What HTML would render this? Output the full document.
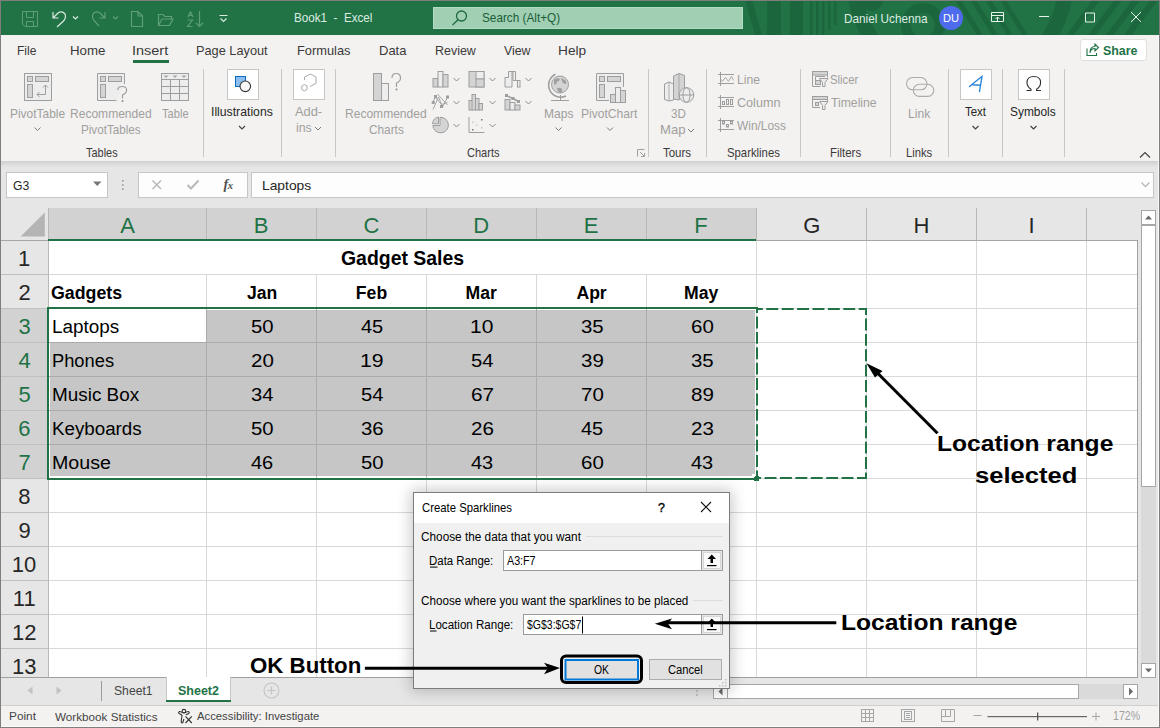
<!DOCTYPE html>
<html><head><meta charset="utf-8"><style>
html,body{margin:0;padding:0;width:1160px;height:728px;overflow:hidden;background:#fff}
body{position:relative;font-family:"Liberation Sans",sans-serif}
.r{position:absolute}
.t{position:absolute;white-space:pre;line-height:normal;transform-origin:0 0}
svg{position:absolute;overflow:visible}
</style></head><body>
<div class="r" style="left:0px;top:0px;width:1160px;height:728px;background:#e6e6e6;"></div>
<div class="r" style="left:0px;top:0px;width:1160px;height:35px;background:#217346;"></div>
<div class="r" style="left:0px;top:35px;width:1160px;height:126px;background:#f3f2f1;"></div>
<div class="r" style="left:0px;top:161px;width:1160px;height:47px;background:#e6e6e6;"></div>
<div class="r" style="left:0;top:161px;width:1160px;height:6px;background:linear-gradient(#d0d0d0,#e6e6e6)"></div>
<svg style="left:0;top:0;overflow:hidden" width="1160" height="35" viewBox="0 0 1160 35"><g fill="#1c663d"><path d="M745 0 H752 L762 35 H755 Z"/><rect x="767" y="0" width="14" height="35"/><rect x="790" y="0" width="13" height="35"/><rect x="810" y="0" width="2.5" height="35"/><rect x="816" y="0" width="2.5" height="35"/><rect x="822" y="0" width="2.5" height="35"/><rect x="828" y="0" width="2.5" height="30"/><rect x="834" y="0" width="2.5" height="25"/><circle cx="871" cy="-2" r="13"/></g><g fill="none" stroke="#1c663d"><circle cx="923" cy="25" r="17" stroke-width="10"/><circle cx="960" cy="-20" r="106" stroke-width="15"/><path d="M958 0 L980 35 M973 0 L995 35 M988 0 L1010 35 M1003 0 L1025 35" stroke-width="5"/><path d="M1070 35 L1100 -5 M1088 40 L1122 -5 M1106 40 L1140 -5 M1124 40 L1158 -5" stroke-width="6"/></g></svg>
<svg style="left:0;top:0" width="240" height="35" viewBox="0 0 240 35"><g fill="none" stroke="#5e9e79" stroke-width="1"><path d="M22.5 11.5 H37.5 V26.5 H25 L22.5 24 Z M26.5 11.5 V17.5 H33.5 V11.5 M26.5 26.5 V21.5 H33.5 V26.5"/></g><g fill="none" stroke="#d9ebe0" stroke-width="1.2"><path d="M53 12 V18 H58.5 M53.5 17.5 L58 13 Q62 10.5 65 14 Q66.5 17.5 63.5 21 L57 27"/><path d="M73 16.5 L75.5 19 L78 16.5"/></g><g fill="none" stroke="#5e9e79" stroke-width="1.2"><path d="M105 12 V18 H99.5 M104.5 17.5 L100 13 Q96 10.5 93 14 Q91.5 17.5 94.5 21 L99 26"/><path d="M113 16.5 L115.5 19 L118 16.5"/><path d="M131.5 11.5 H138 L142.5 16 V26.5 H131.5 Z M138 11.5 V16 H142.5"/><path d="M158.5 25.5 V14.5 H163 L165 16.5 H171.5 V19 M158.5 25.5 L162 19 H173 L169.5 25.5 Z"/><path d="M188 17 L190.5 12 L193 17 M189 15.5 H192 M187.5 20 H192.5 L187.5 26.5 H192.5 M199.5 11 V26.5 M196 23 L199.5 26.5 L203 23"/></g><g fill="none" stroke="#d9ebe0" stroke-width="1.2"><path d="M219.5 15.5 H227.5 M220.5 18.5 L223.5 21.5 L226.5 18.5"/></g></svg>
<div class="t" style="left:294.07px;top:10.20px;font-size:13.00px;color:#dcece2;transform:scaleX(0.8967);">Book1  -  Excel</div>
<div class="r" style="left:432.5px;top:6.8px;width:310.5px;height:22.2px;background:#a0cfb3;box-sizing:border-box;border:1px solid #b6dbc5;"></div>
<svg style="left:449px;top:9px" width="20" height="18" viewBox="0 0 20 18"><g fill="none" stroke="#1f6b40" stroke-width="1.3"><circle cx="12.5" cy="7" r="5"/><path d="M9 10.8 L3.5 16"/></g></svg>
<div class="t" style="left:481.87px;top:10.40px;font-size:13.00px;color:#1b5e38;transform:scaleX(0.9052);">Search (Alt+Q)</div>
<div class="t" style="left:844.06px;top:11.00px;font-size:13.00px;color:#dcece2;transform:scaleX(0.9032);">Daniel Uchenna</div>
<div class="r" style="left:938.5px;top:6px;width:24px;height:24px;border-radius:50%;background:#4f6bed"></div>
<div class="t" style="left:942.91px;top:12.00px;font-size:11.50px;color:#ffffff;transform:scaleX(0.9677);">DU</div>
<svg style="left:980px;top:0" width="180" height="35" viewBox="980 0 180 35"><g fill="none" stroke="#e8f2ec" stroke-width="1"><path d="M991.5 12.5 H1003.5 V21.5 H991.5 Z M991.5 15.5 H1003.5 M997.5 21 V17 M995.5 19 L997.5 17 L999.5 19"/><path d="M1039 16.5 H1049"/><path d="M1085.5 13 H1094.5 V22 H1085.5 Z"/><path d="M1131 12 L1141 22 M1141 12 L1131 22"/></g></svg>
<div class="t" style="left:17.44px;top:43.00px;font-size:13.40px;color:#3b3a39;transform:scaleX(0.8995);">File</div>
<div class="t" style="left:69.54px;top:43.00px;font-size:13.40px;color:#3b3a39;transform:scaleX(0.9931);">Home</div>
<div class="t" style="left:131.90px;top:43.00px;font-size:13.40px;color:#3b3a39;transform:scaleX(1.0798);">Insert</div>
<div class="t" style="left:196.38px;top:43.00px;font-size:13.40px;color:#3b3a39;transform:scaleX(0.9527);">Page Layout</div>
<div class="t" style="left:297.37px;top:43.00px;font-size:13.40px;color:#3b3a39;transform:scaleX(0.9588);">Formulas</div>
<div class="t" style="left:379.16px;top:43.00px;font-size:13.40px;color:#3b3a39;transform:scaleX(0.9705);">Data</div>
<div class="t" style="left:435.30px;top:43.00px;font-size:13.40px;color:#3b3a39;transform:scaleX(0.9305);">Review</div>
<div class="t" style="left:503.94px;top:43.00px;font-size:13.40px;color:#3b3a39;transform:scaleX(0.9220);">View</div>
<div class="t" style="left:557.90px;top:43.00px;font-size:13.40px;color:#3b3a39;transform:scaleX(1.0220);">Help</div>
<div class="r" style="left:133px;top:60px;width:36px;height:3px;background:#217346;"></div>
<div class="r" style="left:1079.5px;top:38.8px;width:67px;height:22.5px;background:#ffffff;box-sizing:border-box;border:1px solid #e1dfdd;border-radius:3px;"></div>
<svg style="left:1085px;top:43px" width="16" height="14" viewBox="0 0 16 14"><g fill="none" stroke="#217346" stroke-width="1.1"><path d="M2 5.5 V12.5 H11.5 V10"/><path d="M5 10 Q5.5 5.5 10 5.5 V8 L13.5 4.5 L10 1 V3.5 Q5 3.5 5 10"/></g></svg>
<div class="t" style="left:1102.63px;top:42.80px;font-size:13.20px;color:#217346;font-weight:bold;transform:scaleX(0.9403);">Share</div>
<div class="r" style="left:203px;top:69px;width:1px;height:88px;background:#c8c6c4;"></div>
<div class="r" style="left:281px;top:69px;width:1px;height:88px;background:#c8c6c4;"></div>
<div class="r" style="left:335px;top:69px;width:1px;height:88px;background:#c8c6c4;"></div>
<div class="r" style="left:648px;top:69px;width:1px;height:88px;background:#c8c6c4;"></div>
<div class="r" style="left:706px;top:69px;width:1px;height:88px;background:#c8c6c4;"></div>
<div class="r" style="left:800px;top:69px;width:1px;height:88px;background:#c8c6c4;"></div>
<div class="r" style="left:890px;top:69px;width:1px;height:88px;background:#c8c6c4;"></div>
<div class="r" style="left:948px;top:69px;width:1px;height:88px;background:#c8c6c4;"></div>
<div class="r" style="left:1002px;top:69px;width:1px;height:88px;background:#c8c6c4;"></div>
<div class="r" style="left:1064px;top:69px;width:1px;height:88px;background:#c8c6c4;"></div>
<div class="t" style="left:85.78px;top:144.70px;font-size:12.80px;color:#3b3a39;transform:scaleX(0.8543);">Tables</div>
<div class="t" style="left:467.05px;top:144.70px;font-size:12.80px;color:#3b3a39;transform:scaleX(0.8632);">Charts</div>
<div class="t" style="left:662.77px;top:144.70px;font-size:12.80px;color:#3b3a39;transform:scaleX(0.8957);">Tours</div>
<div class="t" style="left:726.89px;top:144.70px;font-size:12.80px;color:#3b3a39;transform:scaleX(0.8851);">Sparklines</div>
<div class="t" style="left:829.58px;top:144.70px;font-size:12.80px;color:#3b3a39;transform:scaleX(0.8937);">Filters</div>
<div class="t" style="left:905.60px;top:144.70px;font-size:12.80px;color:#3b3a39;transform:scaleX(0.8763);">Links</div>
<div class="t" style="left:10.24px;top:106.00px;font-size:13.00px;color:#a19f9d;transform:scaleX(0.9183);">PivotTable</div>
<div class="t" style="left:69.64px;top:106.00px;font-size:13.00px;color:#a19f9d;transform:scaleX(0.9263);">Recommended</div>
<div class="t" style="left:80.77px;top:121.50px;font-size:13.00px;color:#a19f9d;transform:scaleX(0.8954);">PivotTables</div>
<div class="t" style="left:161.78px;top:106.00px;font-size:13.00px;color:#a19f9d;transform:scaleX(0.8569);">Table</div>
<div class="t" style="left:211.20px;top:104.00px;font-size:13.00px;color:#262626;transform:scaleX(0.9399);">Illustrations</div>
<div class="t" style="left:295.00px;top:104.00px;font-size:13.00px;color:#a19f9d;transform:scaleX(0.9885);">Add-</div>
<div class="t" style="left:295.50px;top:119.70px;font-size:13.00px;color:#a19f9d;transform:scaleX(0.9452);">ins</div>
<div class="t" style="left:345.44px;top:106.00px;font-size:13.00px;color:#a19f9d;transform:scaleX(0.9263);">Recommended</div>
<div class="t" style="left:369.41px;top:121.60px;font-size:13.00px;color:#a19f9d;transform:scaleX(0.9091);">Charts</div>
<div class="t" style="left:543.64px;top:106.00px;font-size:13.00px;color:#a19f9d;transform:scaleX(0.9277);">Maps</div>
<div class="t" style="left:581.43px;top:106.00px;font-size:13.00px;color:#a19f9d;transform:scaleX(0.9288);">PivotChart</div>
<div class="t" style="left:670.54px;top:105.80px;font-size:13.00px;color:#a19f9d;transform:scaleX(0.8920);">3D</div>
<div class="t" style="left:659.55px;top:122.00px;font-size:13.00px;color:#a19f9d;transform:scaleX(1.0074);">Map</div>
<div class="t" style="left:736.53px;top:71.50px;font-size:13.00px;color:#a19f9d;transform:scaleX(0.9370);">Line</div>
<div class="t" style="left:736.87px;top:94.50px;font-size:13.00px;color:#a19f9d;transform:scaleX(0.9702);">Column</div>
<div class="t" style="left:737.44px;top:117.80px;font-size:13.00px;color:#a19f9d;transform:scaleX(0.9167);">Win/Loss</div>
<div class="t" style="left:830.49px;top:71.50px;font-size:13.00px;color:#a19f9d;transform:scaleX(0.8670);">Slicer</div>
<div class="t" style="left:830.76px;top:94.50px;font-size:13.00px;color:#a19f9d;transform:scaleX(0.9377);">Timeline</div>
<div class="t" style="left:908.43px;top:106.00px;font-size:13.00px;color:#a19f9d;transform:scaleX(0.9336);">Link</div>
<div class="t" style="left:964.77px;top:104.00px;font-size:13.00px;color:#262626;transform:scaleX(0.8822);">Text</div>
<div class="t" style="left:1010.46px;top:104.00px;font-size:13.00px;color:#262626;transform:scaleX(0.9157);">Symbols</div>
<svg style="left:0;top:0" width="1160" height="728" viewBox="0 0 1160 728"><g stroke="#9e9e9e" stroke-width="1"><rect x="24.5" y="73.5" width="27" height="27" fill="#ededed"/><rect x="27.5" y="76.5" width="5" height="5" fill="#d4d4d4"/><rect x="35.5" y="76.5" width="13" height="5" fill="#d4d4d4"/><rect x="27.5" y="84.5" width="5" height="13" fill="#d4d4d4"/><path d="M45.5 85 V94.5 H37 M43 87.5 L45.5 85 L48 87.5 M39.5 92 L37 94.5 L39.5 97" fill="none"/><path d="M124.5 84 V73.5 H97.5 V100.5 H116.5" fill="#ededed"/><rect x="100.5" y="76.5" width="5" height="5" fill="#d4d4d4"/><rect x="108.5" y="76.5" width="13" height="5" fill="#d4d4d4"/><rect x="100.5" y="84.5" width="5" height="13" fill="#d4d4d4"/><path d="M117.8 90 Q117.8 86.5 122.2 86.5 Q126.6 86.5 126.6 90.3 Q126.6 93.3 122.5 95 V98.5" fill="none" stroke-width="1.2"/><rect x="122" y="100.6" width="1" height="1" stroke-width="0.8"/><rect x="161.5" y="73.5" width="27" height="27" fill="#ededed"/><path d="M161.5 79.5 H188.5 M161.5 86.5 H188.5 M161.5 93.5 H188.5 M170.5 79.5 V100.5 M179.5 79.5 V100.5" fill="none"/></g><g fill="#a8a8a8"><path d="M163.5 75.5 h5 l-2.5 2.5z M172.5 75.5 h5 l-2.5 2.5z M181.5 75.5 h5 l-2.5 2.5z"/></g><path d="M34.5 127.5 L37.5 130.5 L40.5 127.5" fill="none" stroke="#7a7a7a" stroke-width="1"/><rect x="227.5" y="69.5" width="31" height="30" fill="#fff" stroke="#c8c6c4"/><rect x="235.5" y="76.5" width="10" height="10" fill="#8cbff0" stroke="#0f6cbd"/><circle cx="245.3" cy="86.3" r="5.3" fill="#f7f7f7" stroke="#333" stroke-width="1.1"/><path d="M239.0 126.0 L242.0 129.0 L245.0 126.0" fill="none" stroke="#444" stroke-width="1.2"/><rect x="293.5" y="69.5" width="31" height="30" fill="#fff" stroke="#c8c6c4"/><g fill="none" stroke="#ababab" stroke-width="1"><path d="M304.5 80 V77 L310.3 74 L316 77 V83.5 L310 86.5"/><path d="M304.4 84.5 L307 86 V89.5 L304.4 91 L301.8 89.5 V86 Z"/></g><path d="M315.0 127.0 L318.0 130.0 L321.0 127.0" fill="none" stroke="#7a7a7a" stroke-width="1"/><g stroke="#9e9e9e" stroke-width="1"><rect x="373.5" y="73.5" width="8" height="27" fill="#d4d4d4"/><rect x="381.5" y="83.5" width="7" height="17" fill="#ededed"/><path d="M392 78 Q392 73.5 396.2 73.5 Q400.5 73.5 400.5 78 Q400.5 81.5 396.5 83 V87" fill="none" stroke-width="1.2"/><rect x="396" y="89" width="1" height="1" stroke-width="0.8"/></g><g transform="translate(432.5 71)" stroke="#9e9e9e" stroke-width="1"><rect x="0.5" y="7.5" width="5" height="8.5" fill="#d4d4d4"/><rect x="5.5" y="0.5" width="5" height="15.5" fill="#ededed"/><rect x="10.5" y="3.5" width="5" height="12.5" fill="#d4d4d4"/></g><g transform="translate(468.5 71)" stroke="#9e9e9e" stroke-width="1"><rect x="0.5" y="0.5" width="15" height="15.5" fill="#d4d4d4"/><rect x="7.5" y="0.5" width="8" height="7.5" fill="#ededed"/><rect x="7.5" y="8" width="8" height="8" fill="#d4d4d4"/></g><g transform="translate(504.5 71)" stroke="#9e9e9e" stroke-width="1"><path d="M0.5 16 V6.5 H4 V0.5 H7.5 V16 Z" fill="#ededed"/><path d="M5 0.5 H11 V9.5 H8.5 V0.5" fill="none"/><rect x="13" y="9.5" width="2.5" height="6.5" fill="#ededed"/><path d="M11 9.5 H13" fill="none"/></g><g transform="translate(432.5 94)" stroke="#9e9e9e" stroke-width="1"><path d="M0.5 15.5 L6 3 L10 13 L15.5 2.5 M0.5 8.5 L2.5 3 L9 10.5 L15 8.5 M5 0 L15 11" fill="none" stroke-width="0.9"/><rect x="2" y="1.5" width="2" height="2" fill="#9e9e9e"/><rect x="-0.3" y="7.5" width="2" height="2" fill="#9e9e9e"/><rect x="8" y="11.5" width="2" height="2" fill="#9e9e9e"/><rect x="14" y="2" width="2" height="2" fill="#9e9e9e"/></g><g transform="translate(468.5 94)" stroke="#9e9e9e" stroke-width="1"><rect x="0.5" y="6.5" width="3.5" height="9.5" fill="#d4d4d4"/><rect x="3.5" y="0.5" width="3.5" height="15.5" fill="#d4d4d4"/><rect x="7" y="4.5" width="3.5" height="11.5" fill="#d4d4d4"/><rect x="10.5" y="9.5" width="3.5" height="6.5" fill="#d4d4d4"/></g><g transform="translate(504.5 94)" stroke="#9e9e9e" stroke-width="1"><rect x="0.5" y="5.5" width="5" height="10.5" fill="#d4d4d4"/><rect x="5.5" y="8.5" width="5" height="7.5" fill="#ededed"/><rect x="10.5" y="11" width="5" height="5" fill="#d4d4d4"/><path d="M1.5 1.5 L8.5 4.5 L14 7.5" fill="none" stroke-width="1.5"/><rect x="1" y="0.5" width="2" height="2" fill="#9e9e9e"/><rect x="7.5" y="3.5" width="2" height="2" fill="#9e9e9e"/><rect x="13" y="6.5" width="2" height="2" fill="#9e9e9e"/></g><g transform="translate(432.5 117)" stroke="#9e9e9e" stroke-width="1"><path d="M7.5 0.3 A7.8 7.8 0 1 1 0.3 8.5 H7.5 Z" fill="#d4d4d4"/><path d="M6 6.8 H0 A7 7 0 0 1 6 0 Z" fill="#d4d4d4"/></g><g transform="translate(468.5 117)" stroke="#9e9e9e" stroke-width="1"><path d="M0.5 0 V15.5 H16" fill="none"/><rect x="3.5" y="12" width="1.5" height="1.5" fill="#777" stroke="none"/><rect x="12.5" y="2" width="1.5" height="1.5" fill="#777" stroke="none"/><rect x="3.5" y="4.5" width="1.5" height="1.5" fill="#ccc" stroke="none"/><rect x="7.5" y="7.5" width="1.5" height="1.5" fill="#ccc" stroke="none"/><rect x="12.5" y="10" width="1.5" height="1.5" fill="#ccc" stroke="none"/></g><path d="M453.5 78.0 L456.5 81.0 L459.5 78.0" fill="none" stroke="#8a8a8a" stroke-width="1"/><path d="M453.5 101.0 L456.5 104.0 L459.5 101.0" fill="none" stroke="#8a8a8a" stroke-width="1"/><path d="M489.5 78.0 L492.5 81.0 L495.5 78.0" fill="none" stroke="#8a8a8a" stroke-width="1"/><path d="M489.5 101.0 L492.5 104.0 L495.5 101.0" fill="none" stroke="#8a8a8a" stroke-width="1"/><path d="M525.5 78.0 L528.5 81.0 L531.5 78.0" fill="none" stroke="#8a8a8a" stroke-width="1"/><path d="M525.5 101.0 L528.5 104.0 L531.5 101.0" fill="none" stroke="#8a8a8a" stroke-width="1"/><path d="M453.5 124.0 L456.5 127.0 L459.5 124.0" fill="none" stroke="#8a8a8a" stroke-width="1"/><path d="M489.5 124.0 L492.5 127.0 L495.5 124.0" fill="none" stroke="#8a8a8a" stroke-width="1"/><g stroke="#9e9e9e" stroke-width="1" fill="none"><circle cx="560" cy="84.5" r="8.5" fill="#d4d4d4"/><path d="M555.5 74.2 A10.8 10.8 0 0 0 566 96" stroke-width="1.5"/><path d="M560.5 95 V100.5 M551 100.5 H569"/></g><g fill="#a0a0a0"><path d="M554 80 q3 -3 6 -1 q-1 3 -3 3 q-1 4 -3 2z M561 78 q3 1 5 3 q1 3 -1 3 q-3 -1 -3 -3z M557 88 q3 -1 5 1 q1 3 -2 4 q-3 -2 -3 -5z"/></g><path d="M555.5 127.5 L558.5 130.5 L561.5 127.5" fill="none" stroke="#7a7a7a" stroke-width="1"/><g stroke="#9e9e9e" stroke-width="1"><path d="M609 100.5 H596.5 V73.5 H623.5 V87" fill="#ededed"/><rect x="599.5" y="76.5" width="5" height="5" fill="#d4d4d4"/><rect x="607.5" y="76.5" width="13" height="5" fill="#d4d4d4"/><rect x="599.5" y="84.5" width="5" height="13" fill="#d4d4d4"/><rect x="610.5" y="94.5" width="5" height="8" fill="#d4d4d4"/><rect x="615.5" y="87.5" width="5" height="15" fill="#ededed"/><rect x="620.5" y="90.5" width="5" height="12" fill="#d4d4d4"/></g><path d="M607.0 127.5 L610.0 130.5 L613.0 127.5" fill="none" stroke="#7a7a7a" stroke-width="1"/><g stroke="#a0a0a0" fill="none" stroke-width="1"><path d="M637.5 156.5 V149.5 H644.5 M640 152 L644.5 156.5 M641 156.5 H644.5 V153"/></g><g stroke="#9e9e9e" stroke-width="1"><path d="M664.5 84 L669 82 L673.5 84 V100 L669 101 L664.5 99.5 Z" fill="#ededed"/><path d="M669 82 V101" fill="none" stroke-width="0.8"/><path d="M673.5 76 L679 73.5 L684.5 75.5 V91 L679 100 L673.5 99 Z" fill="#d4d4d4"/><path d="M679 73.5 V100" fill="none" stroke-width="0.8"/><circle cx="686.5" cy="95" r="7.3" fill="#ededed"/><path d="M679.2 95 H693.8" fill="none"/><ellipse cx="686.5" cy="95" rx="3.6" ry="7.3" fill="none"/></g><path d="M688.0 129.0 L691.0 132.0 L694.0 129.0" fill="none" stroke="#7a7a7a" stroke-width="1"/><g stroke="#9e9e9e" stroke-width="1" fill="none"><path d="M720.5 72 V86 M718 74.5 H734 M718 83.5 H734"/></g><g stroke="#9e9e9e" stroke-width="1" fill="none"><path d="M720.5 95 V109 M718 97.5 H734 M718 106.5 H734"/></g><g stroke="#9e9e9e" stroke-width="1" fill="none"><path d="M720.5 118 V132 M718 120.5 H734 M718 129.5 H734"/></g><path d="M721.2 79.4 L722.3 81.4 L725.5 77.4 L728.4 81.4 L731.5 76.3 L733.5 80.4" fill="none" stroke="#ababab" stroke-width="1"/><g stroke="#9e9e9e" stroke-width="1" fill="#ededed"><rect x="722.5" y="101.5" width="2" height="3"/><rect x="726.5" y="99.5" width="2" height="5"/><rect x="730.5" y="99.5" width="2" height="5"/></g><g stroke="#9e9e9e" stroke-width="1" fill="#ededed"><rect x="722.5" y="121.5" width="2" height="2.5"/><rect x="726.5" y="124.5" width="2" height="2.5"/><rect x="730.5" y="121.5" width="2" height="2.5"/></g><g stroke="#9e9e9e" stroke-width="1"><rect x="812.5" y="71.5" width="15" height="3.5" fill="#d4d4d4"/><path d="M812.5 75 V86.5 H820.5 M827.5 75 V77.5" fill="none"/><rect x="815.5" y="80.5" width="5" height="4" fill="#d4d4d4"/><path d="M815.5 84.5 V76.5 H825" fill="none"/><path d="M819.5 78.5 H828 L825 82.5 V86.5 H822.5 V82.5 Z" fill="#ededed"/><rect x="812.5" y="96.5" width="15" height="3" fill="#d4d4d4"/><path d="M812.5 99.5 V107.5 H820 M827.5 99.5 V101.5" fill="none"/><rect x="815.5" y="102.5" width="3" height="3" fill="#d4d4d4"/><path d="M819.5 101.5 H828 L825 105.5 V109.5 H822.5 V105.5 Z" fill="#ededed"/></g><g fill="none" stroke="#ababab" stroke-width="1.1"><rect x="906.5" y="77.5" width="20.5" height="12.3" rx="6.15"/><rect x="913.3" y="84.3" width="20.5" height="12.1" rx="6.05"/></g><rect x="960.5" y="69.5" width="31" height="30" fill="#fff" stroke="#c8c6c4"/><path d="M969.5 86.5 Q976 81 982 76.5 L979.5 91.5 M972.5 84.8 L980.5 85.3" fill="none" stroke="#2b88d8" stroke-width="1.4" stroke-linecap="round"/><path d="M972.5 126.0 L975.5 129.0 L978.5 126.0" fill="none" stroke="#444" stroke-width="1.2"/><rect x="1018.5" y="69.5" width="31" height="30" fill="#fff" stroke="#c8c6c4"/><path d="M1026.5 90.5 H1031 V89.3 Q1027 86.5 1027 82.5 Q1027 76.5 1033.8 76.5 Q1040.6 76.5 1040.6 82.5 Q1040.6 86.5 1036.6 89.3 V90.5 H1041" fill="none" stroke="#333" stroke-width="1.1"/><path d="M1030.5 126.0 L1033.5 129.0 L1036.5 126.0" fill="none" stroke="#444" stroke-width="1.2"/><path d="M1140 157.5 L1145 152.5 L1150 157.5" fill="none" stroke="#444" stroke-width="1.2"/></svg>
<div class="r" style="left:6px;top:172px;width:102px;height:26px;background:#ffffff;box-sizing:border-box;border:1px solid #c6c6c6;"></div>
<div class="t" style="left:12.59px;top:177.80px;font-size:13.00px;color:#262626;transform:scaleX(0.9391);">G3</div>
<div class="r" style="left:138px;top:172px;width:110px;height:26px;background:#fdfdfd;box-sizing:border-box;border:1px solid #c6c6c6;"></div>
<svg style="left:0;top:160px" width="260" height="48" viewBox="0 160 260 48"><path d="M93 181.5 H101.5 L97.25 186 Z" fill="#777"/><g fill="#9a9a9a"><rect x="122" y="180" width="1.6" height="1.6"/><rect x="122" y="184.2" width="1.6" height="1.6"/><rect x="122" y="188.4" width="1.6" height="1.6"/></g><path d="M152.5 180.5 L161 189 M161 180.5 L152.5 189" stroke="#b8b8b8" stroke-width="1.5" fill="none"/><path d="M187.5 185 L191 188.5 L198.5 180.5" stroke="#b8b8b8" stroke-width="2" fill="none"/></svg>
<div class="t" style="left:223.5px;top:176.5px;font-family:'Liberation Serif',serif;font-style:italic;font-weight:bold;font-size:14px;color:#505050">f<span style="font-size:10.5px;position:relative;top:0.5px;left:-0.5px">x</span></div>
<div class="r" style="left:251px;top:172px;width:903px;height:26px;background:#fdfdfd;box-sizing:border-box;border:1px solid #c6c6c6;"></div>
<div class="t" style="left:262.29px;top:178.20px;font-size:13.00px;color:#262626;transform:scaleX(1.0629);">Laptops</div>
<svg style="left:1140px;top:180px" width="12" height="10" viewBox="0 0 12 10"><path d="M1.5 2.5 L5.5 6.5 L9.5 2.5" fill="none" stroke="#b8b8b8" stroke-width="1.3"/></svg>
<div class="r" style="left:0px;top:208px;width:1137px;height:32px;background:#e6e6e6;"></div>
<div class="r" style="left:48px;top:208px;width:708px;height:31px;background:#d2d2d2;"></div>
<div class="r" style="left:0px;top:240px;width:48px;height:437px;background:#e6e6e6;"></div>
<div class="r" style="left:0px;top:308px;width:48px;height:170px;background:#d2d2d2;"></div>
<svg style="left:0;top:208px" width="48" height="32" viewBox="0 208 48 32"><path d="M44.8 212.5 V236.5 H20.6 Z" fill="#b4b4b4"/></svg>
<div class="r" style="left:49px;top:241px;width:1088px;height:436px;background:#ffffff;"></div>
<div class="r" style="left:206px;top:310px;width:549px;height:33px;background:#c6c6c6;"></div>
<div class="r" style="left:50px;top:342px;width:705px;height:134px;background:#c6c6c6;"></div>
<svg style="left:0;top:0" width="1160" height="728" viewBox="0 0 1160 728"><rect x="206" y="274" width="1" height="403" fill="#d9d9d9"/><rect x="316" y="274" width="1" height="403" fill="#d9d9d9"/><rect x="426" y="274" width="1" height="403" fill="#d9d9d9"/><rect x="536" y="274" width="1" height="403" fill="#d9d9d9"/><rect x="646" y="274" width="1" height="403" fill="#d9d9d9"/><rect x="756" y="241" width="1" height="436" fill="#d9d9d9"/><rect x="866" y="241" width="1" height="436" fill="#d9d9d9"/><rect x="976" y="241" width="1" height="436" fill="#d9d9d9"/><rect x="1086" y="241" width="1" height="436" fill="#d9d9d9"/><rect x="49" y="274" width="1088" height="1" fill="#d9d9d9"/><rect x="49" y="308" width="1088" height="1" fill="#d9d9d9"/><rect x="49" y="342" width="1088" height="1" fill="#d9d9d9"/><rect x="49" y="376" width="1088" height="1" fill="#d9d9d9"/><rect x="49" y="410" width="1088" height="1" fill="#d9d9d9"/><rect x="49" y="444" width="1088" height="1" fill="#d9d9d9"/><rect x="49" y="478" width="1088" height="1" fill="#d9d9d9"/><rect x="49" y="512" width="1088" height="1" fill="#d9d9d9"/><rect x="49" y="546" width="1088" height="1" fill="#d9d9d9"/><rect x="49" y="580" width="1088" height="1" fill="#d9d9d9"/><rect x="49" y="614" width="1088" height="1" fill="#d9d9d9"/><rect x="49" y="648" width="1088" height="1" fill="#d9d9d9"/><rect x="206" y="309" width="1" height="168" fill="#ababab"/><rect x="316" y="309" width="1" height="168" fill="#ababab"/><rect x="426" y="309" width="1" height="168" fill="#ababab"/><rect x="536" y="309" width="1" height="168" fill="#ababab"/><rect x="646" y="309" width="1" height="168" fill="#ababab"/><rect x="49" y="342" width="707" height="1" fill="#ababab"/><rect x="49" y="376" width="707" height="1" fill="#ababab"/><rect x="49" y="410" width="707" height="1" fill="#ababab"/><rect x="49" y="444" width="707" height="1" fill="#ababab"/><rect x="206" y="208" width="1" height="32" fill="#b8b8b8"/><rect x="316" y="208" width="1" height="32" fill="#b8b8b8"/><rect x="426" y="208" width="1" height="32" fill="#b8b8b8"/><rect x="536" y="208" width="1" height="32" fill="#b8b8b8"/><rect x="646" y="208" width="1" height="32" fill="#b8b8b8"/><rect x="756" y="208" width="1" height="32" fill="#b8b8b8"/><rect x="866" y="208" width="1" height="32" fill="#b8b8b8"/><rect x="976" y="208" width="1" height="32" fill="#b8b8b8"/><rect x="1086" y="208" width="1" height="32" fill="#b8b8b8"/><rect x="48" y="208" width="1" height="470" fill="#b8b8b8"/><rect x="0" y="274" width="48" height="1" fill="#c0c0c0"/><rect x="0" y="308" width="48" height="1" fill="#c0c0c0"/><rect x="0" y="342" width="48" height="1" fill="#c0c0c0"/><rect x="0" y="376" width="48" height="1" fill="#c0c0c0"/><rect x="0" y="410" width="48" height="1" fill="#c0c0c0"/><rect x="0" y="444" width="48" height="1" fill="#c0c0c0"/><rect x="0" y="478" width="48" height="1" fill="#c0c0c0"/><rect x="0" y="512" width="48" height="1" fill="#c0c0c0"/><rect x="0" y="546" width="48" height="1" fill="#c0c0c0"/><rect x="0" y="580" width="48" height="1" fill="#c0c0c0"/><rect x="0" y="614" width="48" height="1" fill="#c0c0c0"/><rect x="0" y="648" width="48" height="1" fill="#c0c0c0"/><rect x="0" y="240" width="1137" height="1" fill="#a6a6a6"/><rect x="48" y="239" width="708" height="2" fill="#217346"/><rect x="46" y="308" width="2" height="170" fill="#217346" opacity="0"/><rect x="1137" y="240" width="1" height="438" fill="#a0a0a0"/><rect x="0" y="677" width="1138" height="1" fill="#a0a0a0"/><rect x="47" y="307" width="711" height="2" fill="#217346"/><rect x="47" y="307" width="2" height="172" fill="#217346"/><rect x="47" y="478" width="707" height="2" fill="#217346"/><rect x="754" y="476" width="5" height="5" fill="#217346"/><rect x="752" y="474" width="3" height="3" fill="#fff"/><path d="M757 309 H867" fill="none" stroke="#217346" stroke-width="2" stroke-dasharray="11.9 3.5" stroke-dashoffset="6.1"/><path d="M757 309 V479" fill="none" stroke="#217346" stroke-width="2" stroke-dasharray="11.9 3.5" stroke-dashoffset="7.9"/><path d="M757 478 H867" fill="none" stroke="#217346" stroke-width="2" stroke-dasharray="11.9 3.5" stroke-dashoffset="7.8"/><path d="M866 309 V479" fill="none" stroke="#217346" stroke-width="2" stroke-dasharray="11.9 3.5" stroke-dashoffset="5.9"/></svg>
<div class="t" style="left:120.19px;top:212.70px;font-size:22.00px;color:#217346;">A</div>
<div class="t" style="left:253.86px;top:212.70px;font-size:22.00px;color:#217346;">B</div>
<div class="t" style="left:363.41px;top:212.70px;font-size:22.00px;color:#217346;">C</div>
<div class="t" style="left:473.19px;top:212.70px;font-size:22.00px;color:#217346;">D</div>
<div class="t" style="left:583.75px;top:212.70px;font-size:22.00px;color:#217346;">E</div>
<div class="t" style="left:694.35px;top:212.70px;font-size:22.00px;color:#217346;">F</div>
<div class="t" style="left:803.19px;top:212.70px;font-size:22.00px;color:#262626;">G</div>
<div class="t" style="left:913.58px;top:212.70px;font-size:22.00px;color:#262626;">H</div>
<div class="t" style="left:1028.47px;top:212.70px;font-size:22.00px;color:#262626;">I</div>
<div class="t" style="left:18.07px;top:246.20px;font-size:22.00px;color:#262626;">1</div>
<div class="t" style="left:18.39px;top:280.20px;font-size:22.00px;color:#262626;">2</div>
<div class="t" style="left:18.39px;top:314.20px;font-size:22.00px;color:#217346;">3</div>
<div class="t" style="left:18.50px;top:348.20px;font-size:22.00px;color:#217346;">4</div>
<div class="t" style="left:18.39px;top:382.20px;font-size:22.00px;color:#217346;">5</div>
<div class="t" style="left:18.28px;top:416.20px;font-size:22.00px;color:#217346;">6</div>
<div class="t" style="left:18.39px;top:450.20px;font-size:22.00px;color:#217346;">7</div>
<div class="t" style="left:18.34px;top:484.20px;font-size:22.00px;color:#262626;">8</div>
<div class="t" style="left:18.39px;top:518.20px;font-size:22.00px;color:#262626;">9</div>
<div class="t" style="left:11.85px;top:552.20px;font-size:22.00px;color:#262626;">10</div>
<div class="t" style="left:12.79px;top:586.20px;font-size:22.00px;color:#262626;">11</div>
<div class="t" style="left:12.01px;top:620.20px;font-size:22.00px;color:#262626;">12</div>
<div class="t" style="left:11.90px;top:654.20px;font-size:22.00px;color:#262626;">13</div>
<div class="t" style="left:340.82px;top:247.20px;font-size:19.60px;color:#000;font-weight:bold;transform:scaleX(0.9919);">Gadget Sales</div>
<div class="t" style="left:50.99px;top:283.00px;font-size:18.00px;color:#000;font-weight:bold;transform:scaleX(0.9878);">Gadgets</div>
<div class="t" style="left:246.96px;top:283.00px;font-size:17.60px;color:#000;font-weight:bold;">Jan</div>
<div class="t" style="left:355.86px;top:283.00px;font-size:17.60px;color:#000;font-weight:bold;">Feb</div>
<div class="t" style="left:465.60px;top:283.00px;font-size:17.60px;color:#000;font-weight:bold;">Mar</div>
<div class="t" style="left:576.43px;top:283.00px;font-size:17.60px;color:#000;font-weight:bold;">Apr</div>
<div class="t" style="left:684.06px;top:283.00px;font-size:17.60px;color:#000;font-weight:bold;">May</div>
<div class="t" style="left:51.69px;top:317.00px;font-size:18.00px;color:#000;transform:scaleX(1.0498);">Laptops</div>
<div class="t" style="left:250.99px;top:316.00px;font-size:18.60px;color:#000;transform:scaleX(1.0909);">50</div>
<div class="t" style="left:361.40px;top:316.00px;font-size:18.60px;color:#000;transform:scaleX(1.0753);">45</div>
<div class="t" style="left:470.23px;top:316.00px;font-size:18.60px;color:#000;transform:scaleX(1.1290);">10</div>
<div class="t" style="left:580.98px;top:316.00px;font-size:18.60px;color:#000;transform:scaleX(1.0961);">35</div>
<div class="t" style="left:690.78px;top:316.00px;font-size:18.60px;color:#000;transform:scaleX(1.1015);">60</div>
<div class="t" style="left:51.74px;top:351.00px;font-size:18.00px;color:#000;transform:scaleX(1.0161);">Phones</div>
<div class="t" style="left:250.78px;top:350.00px;font-size:18.60px;color:#000;transform:scaleX(1.1015);">20</div>
<div class="t" style="left:360.21px;top:350.00px;font-size:18.60px;color:#000;transform:scaleX(1.1404);">19</div>
<div class="t" style="left:470.99px;top:350.00px;font-size:18.60px;color:#000;transform:scaleX(1.0856);">54</div>
<div class="t" style="left:580.98px;top:350.00px;font-size:18.60px;color:#000;transform:scaleX(1.1015);">39</div>
<div class="t" style="left:690.98px;top:350.00px;font-size:18.60px;color:#000;transform:scaleX(1.0961);">35</div>
<div class="t" style="left:51.69px;top:385.00px;font-size:18.00px;color:#000;transform:scaleX(1.0497);">Music Box</div>
<div class="t" style="left:250.99px;top:384.00px;font-size:18.60px;color:#000;transform:scaleX(1.0856);">34</div>
<div class="t" style="left:360.99px;top:384.00px;font-size:18.60px;color:#000;transform:scaleX(1.0856);">54</div>
<div class="t" style="left:470.76px;top:384.00px;font-size:18.60px;color:#000;transform:scaleX(1.1179);">67</div>
<div class="t" style="left:580.78px;top:384.00px;font-size:18.60px;color:#000;transform:scaleX(1.1015);">70</div>
<div class="t" style="left:690.87px;top:384.00px;font-size:18.60px;color:#000;transform:scaleX(1.1069);">89</div>
<div class="t" style="left:51.70px;top:419.00px;font-size:18.00px;color:#000;transform:scaleX(1.0420);">Keyboards</div>
<div class="t" style="left:250.99px;top:418.00px;font-size:18.60px;color:#000;transform:scaleX(1.0909);">50</div>
<div class="t" style="left:360.98px;top:418.00px;font-size:18.60px;color:#000;transform:scaleX(1.0961);">36</div>
<div class="t" style="left:470.77px;top:418.00px;font-size:18.60px;color:#000;transform:scaleX(1.1069);">26</div>
<div class="t" style="left:581.40px;top:418.00px;font-size:18.60px;color:#000;transform:scaleX(1.0753);">45</div>
<div class="t" style="left:690.77px;top:418.00px;font-size:18.60px;color:#000;transform:scaleX(1.1069);">23</div>
<div class="t" style="left:51.63px;top:453.00px;font-size:18.00px;color:#000;transform:scaleX(1.0918);">Mouse</div>
<div class="t" style="left:251.40px;top:452.00px;font-size:18.60px;color:#000;transform:scaleX(1.0753);">46</div>
<div class="t" style="left:360.99px;top:452.00px;font-size:18.60px;color:#000;transform:scaleX(1.0909);">50</div>
<div class="t" style="left:471.40px;top:452.00px;font-size:18.60px;color:#000;transform:scaleX(1.0753);">43</div>
<div class="t" style="left:580.78px;top:452.00px;font-size:18.60px;color:#000;transform:scaleX(1.1015);">60</div>
<div class="t" style="left:691.40px;top:452.00px;font-size:18.60px;color:#000;transform:scaleX(1.0753);">43</div>
<div class="r" style="left:1138px;top:208px;width:20px;height:497px;background:#e6e6e6;"></div>
<div class="r" style="left:1141px;top:210px;width:15px;height:467px;background:#dadada;"></div>
<div class="r" style="left:1141px;top:210px;width:15px;height:15px;background:#ffffff;box-sizing:border-box;border:1px solid #a6a6a6;"></div>
<div class="r" style="left:1141px;top:225px;width:15px;height:262px;background:#ffffff;box-sizing:border-box;border:1px solid #a6a6a6;"></div>
<div class="r" style="left:1141px;top:663px;width:15px;height:15px;background:#ffffff;box-sizing:border-box;border:1px solid #a6a6a6;"></div>
<svg style="left:1140px;top:208px" width="18" height="472" viewBox="1140 208 18 472"><path d="M1145 219.5 H1152 L1148.5 215.5 Z M1145 668.5 H1152 L1148.5 672.5 Z" fill="#6a6a6a"/></svg>
<div class="r" style="left:0px;top:678px;width:1138px;height:27px;background:#e6e6e6;"></div>
<div class="r" style="left:0px;top:705px;width:1160px;height:1px;background:#cfcfcf;"></div>
<div class="r" style="left:0px;top:706px;width:1160px;height:22px;background:#f3f2f1;"></div>
<svg style="left:0;top:676px" width="1160" height="52" viewBox="0 676 1160 52"><path d="M32.5 686.5 V694.5 L27.5 690.5 Z M56.5 686.5 V694.5 L61.5 690.5 Z" fill="#c2c2c2"/><rect x="101" y="681" width="1" height="20" fill="#9a9a9a"/><circle cx="271.5" cy="690.5" r="7.5" fill="none" stroke="#c4c4c4" stroke-width="1.1"/><path d="M267.5 690.5 H275.5 M271.5 686.5 V694.5" stroke="#c4c4c4" stroke-width="1.2"/></svg>
<div class="r" style="left:166px;top:677px;width:65px;height:25px;background:#ffffff;box-sizing:border-box;border-left:1px solid #c8c8c8;border-right:1px solid #c8c8c8;"></div>
<div class="r" style="left:166px;top:700px;width:65px;height:2px;background:#217346;"></div>
<div class="t" style="left:113.65px;top:683.00px;font-size:13.00px;color:#444;transform:scaleX(0.9366);">Sheet1</div>
<div class="t" style="left:178.03px;top:683.00px;font-size:13.00px;color:#217346;font-weight:bold;transform:scaleX(0.9609);">Sheet2</div>
<div class="r" style="left:728px;top:684px;width:409px;height:15px;background:#dadada;"></div>
<div class="r" style="left:713px;top:684px;width:15px;height:15px;background:#ffffff;box-sizing:border-box;border:1px solid #a6a6a6;"></div>
<div class="r" style="left:727px;top:684px;width:352px;height:15px;background:#ffffff;box-sizing:border-box;border:1px solid #a6a6a6;"></div>
<div class="r" style="left:1123px;top:684px;width:15px;height:15px;background:#ffffff;box-sizing:border-box;border:1px solid #a6a6a6;"></div>
<svg style="left:700px;top:680px" width="460" height="48" viewBox="700 680 460 48"><path d="M722.5 687.5 V695.5 L718.5 691.5 Z M1129 687.5 V695.5 L1133 691.5 Z" fill="#6a6a6a"/><g fill="none" stroke="#a6a6a6" stroke-width="1"><rect x="861.5" y="709.5" width="12" height="12"/><path d="M865.5 709.5 V721.5 M869.5 709.5 V721.5 M861.5 713.5 H873.5 M861.5 717.5 H873.5"/><rect x="901.5" y="709.5" width="13" height="12"/><rect x="904.5" y="711.5" width="7" height="8"/><path d="M906 713.5 H910 M906 715.5 H910 M906 717.5 H910"/><path d="M941.5 709.5 H954.5 V721.5 H941.5 Z M941.5 716.5 H950.5 V709.5 M945.5 709.5 V716.5"/><path d="M973.5 715.5 H981.5 M1092 716.5 H1100 M1096 712.5 V720.5"/></g><rect x="987.5" y="716" width="99.5" height="1.2" fill="#666"/><rect x="1037" y="712.5" width="1.3" height="8" fill="#555"/></svg>
<div class="t" style="left:8.75px;top:710.20px;font-size:11.50px;color:#444;transform:scaleX(1.0284);">Point</div>
<div class="t" style="left:55.14px;top:710.80px;font-size:11.50px;color:#444;transform:scaleX(1.0172);">Workbook Statistics</div>
<svg style="left:176px;top:706px" width="20" height="20" viewBox="176 706 20 20"><g fill="none" stroke="#333" stroke-width="1.1" stroke-linejoin="round"><circle cx="183.9" cy="711.2" r="1.8"/><path d="M182 715 L179.5 713.8 Q177.8 712.5 179.3 711.6 Q180 711.3 181 711.9 Q183.9 713.6 186.8 711.9 Q187.8 711.3 188.6 711.6 Q190 712.5 188.3 713.8 L185.8 714.8"/><path d="M182 715 L181.2 721.5 Q181.3 723.4 182.8 722.6 L183.9 719"/><path d="M185.5 716.3 L191.8 723 M191.8 716.3 L185.5 723"/></g></svg>
<div class="t" style="left:196.50px;top:710.20px;font-size:11.50px;color:#444;transform:scaleX(0.9816);">Accessibility: Investigate</div>
<div class="t" style="left:1113.01px;top:708.70px;font-size:12.00px;color:#a0a0a0;transform:scaleX(0.8810);">172%</div>
<svg style="left:690px;top:685px" width="12" height="14" viewBox="690 685 12 14"><g fill="#c4c4c4"><rect x="696" y="690" width="2" height="2"/><rect x="696" y="694" width="2" height="2"/></g></svg>
<div class="r" style="left:413px;top:492px;width:317px;height:197px;box-shadow:0 0 14px 2px rgba(0,0,0,0.22)"></div>
<div class="r" style="left:413px;top:492px;width:317px;height:197px;background:#f0f0f0;box-sizing:border-box;border:1px solid #7c7c7c;"></div>
<div class="r" style="left:414px;top:493px;width:315px;height:30px;background:#ffffff;"></div>
<div class="t" style="left:422.03px;top:500.10px;font-size:12.80px;color:#000000;transform:scaleX(0.8851);">Create Sparklines</div>
<div class="t" style="left:658.00px;top:499.80px;font-size:13.50px;color:#000000;transform:scaleX(0.9259);-webkit-text-stroke:0.35px #000;">?</div>
<div class="t" style="left:420.81px;top:530.10px;font-size:12.50px;color:#000000;transform:scaleX(0.9431);">Choose the data that you want</div>
<div class="t" style="left:429.28px;top:553.90px;font-size:12.50px;color:#000000;transform:scaleX(0.9162);">Data Range:</div>
<div class="t" style="left:421.02px;top:594.00px;font-size:12.50px;color:#000000;transform:scaleX(0.9339);">Choose where you want the sparklines to be placed</div>
<div class="t" style="left:429.07px;top:617.80px;font-size:12.50px;color:#000000;transform:scaleX(0.9260);">Location Range:</div>
<svg style="left:0;top:0" width="1160" height="728" viewBox="0 0 1160 728"><path d="M701 502 L711 512 M711 502 L701 512" stroke="#111" stroke-width="1.1" fill="none"/><rect x="586" y="536" width="137" height="1" fill="#dcdcdc"/><rect x="693" y="600" width="30" height="1" fill="#dcdcdc"/><rect x="430" y="566.6" width="7.5" height="1" fill="#000"/><rect x="430" y="630.5" width="6.5" height="1" fill="#000"/><rect x="503.5" y="550.5" width="219.0" height="20.0" fill="#fff" stroke="#9a9a9a" stroke-width="1"/><rect x="701.5" y="550.5" width="21" height="20.0" fill="#e9e9e9" stroke="#9a9a9a" stroke-width="1"/><rect x="703.5" y="552.5" width="17" height="16.0" fill="#fbfbfb" stroke="#d6d6d6" stroke-width="1"/><path d="M711.8 554.5 L707.5 559.0 H710.5 V563.0 H713 V559.0 H716 Z" fill="#000"/><rect x="707" y="565.0" width="9.5" height="1.2" fill="#000"/><rect x="523.5" y="614.5" width="199.0" height="20.0" fill="#fff" stroke="#9a9a9a" stroke-width="1"/><rect x="701.5" y="614.5" width="21" height="20.0" fill="#e9e9e9" stroke="#9a9a9a" stroke-width="1"/><rect x="703.5" y="616.5" width="17" height="16.0" fill="#fbfbfb" stroke="#d6d6d6" stroke-width="1"/><path d="M711.8 618.5 L707.5 623.0 H710.5 V627.0 H713 V623.0 H716 Z" fill="#000"/><rect x="707" y="629.0" width="9.5" height="1.2" fill="#000"/><rect x="582" y="616.5" width="1" height="17" fill="#000"/><rect x="565.5" y="660" width="72.5" height="19.5" fill="#e1e1e1" stroke="#0078d7" stroke-width="2"/><rect x="649.5" y="659.5" width="72" height="20" fill="#e1e1e1" stroke="#adadad" stroke-width="1"/><rect x="561.5" y="656" width="80" height="26.5" rx="4.5" fill="none" stroke="#000" stroke-width="3"/><g fill="#bdbdbd"><rect x="725" y="679" width="1.5" height="1.5"/><rect x="722" y="682" width="1.5" height="1.5"/><rect x="725" y="682" width="1.5" height="1.5"/><rect x="719" y="685" width="1.5" height="1.5"/><rect x="722" y="685" width="1.5" height="1.5"/><rect x="725" y="685" width="1.5" height="1.5"/></g><path d="M937.5 433.3 L874 369.5" stroke="#000" stroke-width="3" fill="none"/><path d="M866.4 363.3 L882.5 371 L875 377.5 Z" fill="#000"/><path d="M836.3 622.8 H668" stroke="#000" stroke-width="3" fill="none"/><path d="M654.8 623.8 L672 618.6 L668 623.8 L672 629.2 Z" fill="#000"/><path d="M364.9 668.3 H550" stroke="#000" stroke-width="3" fill="none"/><path d="M560 668 L544 662.8 L548 668 L544 674.2 Z" fill="#000"/></svg>
<div class="t" style="left:507.00px;top:553.90px;font-size:12.50px;color:#000000;transform:scaleX(0.8566);">A3:F7</div>
<div class="t" style="left:527.30px;top:617.80px;font-size:12.50px;color:#000000;transform:scaleX(0.8391);">$G$3:$G$7</div>
<div class="t" style="left:594.13px;top:663.30px;font-size:12.50px;color:#000000;transform:scaleX(0.8288);">OK</div>
<div class="t" style="left:667.84px;top:663.30px;font-size:12.50px;color:#000000;transform:scaleX(0.8922);">Cancel</div>
<div class="t" style="left:937.20px;top:431.40px;font-size:22.50px;color:#000;font-weight:bold;transform:scaleX(1.0933);">Location range</div>
<div class="t" style="left:975.11px;top:462.80px;font-size:22.50px;color:#000;font-weight:bold;transform:scaleX(1.1362);">selected</div>
<div class="t" style="left:841.00px;top:609.50px;font-size:22.50px;color:#000;font-weight:bold;transform:scaleX(1.0933);">Location range</div>
<div class="t" style="left:250.31px;top:653.90px;font-size:21.50px;color:#000;font-weight:bold;transform:scaleX(1.0356);">OK Button</div>
<div class="r" style="left:1158px;top:35px;width:1px;height:692px;background:#fafafa;"></div>
<div class="r" style="left:1px;top:726px;width:1158px;height:1px;background:#fafafa;"></div>
<div class="r" style="left:0;top:0;width:1160px;height:728px;box-sizing:border-box;border:1px solid #7e7e7e;background:transparent"></div>
</body></html>
